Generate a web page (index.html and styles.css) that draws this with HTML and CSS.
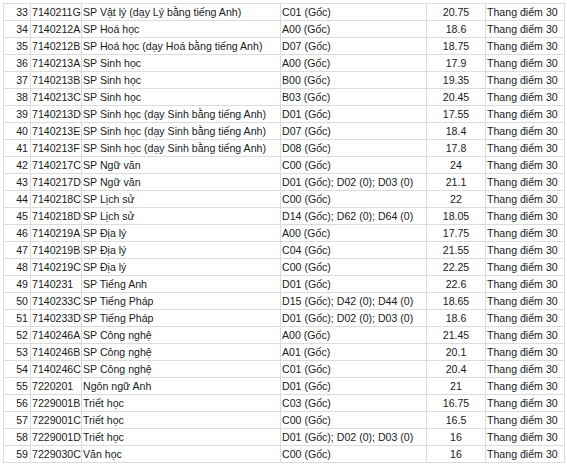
FILE: index.html
```html
<!DOCTYPE html>
<html lang="vi">
<head>
<meta charset="utf-8">
<title>Điểm chuẩn</title>
<link rel="stylesheet" href="styles.css">
</head>
<body>
<div class="frame">
<table class="grid">
<colgroup>
<col class="c-stt"><col class="c-code"><col class="c-name"><col class="c-block"><col class="c-score"><col class="c-scale">
</colgroup>
<tbody>
<tr><td class="stt">33</td><td>7140211G</td><td>SP Vật lý (dạy Lý bằng tiếng Anh)</td><td>C01 (Gốc)</td><td class="score">20.75</td><td>Thang điểm 30</td></tr>
<tr><td class="stt">34</td><td>7140212A</td><td>SP Hoá học</td><td>A00 (Gốc)</td><td class="score">18.6</td><td>Thang điểm 30</td></tr>
<tr><td class="stt">35</td><td>7140212B</td><td>SP Hoá học (dạy Hoá bằng tiếng Anh)</td><td>D07 (Gốc)</td><td class="score">18.75</td><td>Thang điểm 30</td></tr>
<tr><td class="stt">36</td><td>7140213A</td><td>SP Sinh học</td><td>A00 (Gốc)</td><td class="score">17.9</td><td>Thang điểm 30</td></tr>
<tr><td class="stt">37</td><td>7140213B</td><td>SP Sinh học</td><td>B00 (Gốc)</td><td class="score">19.35</td><td>Thang điểm 30</td></tr>
<tr><td class="stt">38</td><td>7140213C</td><td>SP Sinh học</td><td>B03 (Gốc)</td><td class="score">20.45</td><td>Thang điểm 30</td></tr>
<tr><td class="stt">39</td><td>7140213D</td><td>SP Sinh học (dạy Sinh bằng tiếng Anh)</td><td>D01 (Gốc)</td><td class="score">17.55</td><td>Thang điểm 30</td></tr>
<tr><td class="stt">40</td><td>7140213E</td><td>SP Sinh học (dạy Sinh bằng tiếng Anh)</td><td>D07 (Gốc)</td><td class="score">18.4</td><td>Thang điểm 30</td></tr>
<tr><td class="stt">41</td><td>7140213F</td><td>SP Sinh học (dạy Sinh bằng tiếng Anh)</td><td>D08 (Gốc)</td><td class="score">17.8</td><td>Thang điểm 30</td></tr>
<tr><td class="stt">42</td><td>7140217C</td><td>SP Ngữ văn</td><td>C00 (Gốc)</td><td class="score">24</td><td>Thang điểm 30</td></tr>
<tr><td class="stt">43</td><td>7140217D</td><td>SP Ngữ văn</td><td>D01 (Gốc); D02 (0); D03 (0)</td><td class="score">21.1</td><td>Thang điểm 30</td></tr>
<tr><td class="stt">44</td><td>7140218C</td><td>SP Lịch sử</td><td>C00 (Gốc)</td><td class="score">22</td><td>Thang điểm 30</td></tr>
<tr><td class="stt">45</td><td>7140218D</td><td>SP Lịch sử</td><td>D14 (Gốc); D62 (0); D64 (0)</td><td class="score">18.05</td><td>Thang điểm 30</td></tr>
<tr><td class="stt">46</td><td>7140219A</td><td>SP Địa lý</td><td>A00 (Gốc)</td><td class="score">17.75</td><td>Thang điểm 30</td></tr>
<tr><td class="stt">47</td><td>7140219B</td><td>SP Địa lý</td><td>C04 (Gốc)</td><td class="score">21.55</td><td>Thang điểm 30</td></tr>
<tr><td class="stt">48</td><td>7140219C</td><td>SP Địa lý</td><td>C00 (Gốc)</td><td class="score">22.25</td><td>Thang điểm 30</td></tr>
<tr><td class="stt">49</td><td>7140231</td><td>SP Tiếng Anh</td><td>D01 (Gốc)</td><td class="score">22.6</td><td>Thang điểm 30</td></tr>
<tr><td class="stt">50</td><td>7140233C</td><td>SP Tiếng Pháp</td><td>D15 (Gốc); D42 (0); D44 (0)</td><td class="score">18.65</td><td>Thang điểm 30</td></tr>
<tr><td class="stt">51</td><td>7140233D</td><td>SP Tiếng Pháp</td><td>D01 (Gốc); D02 (0); D03 (0)</td><td class="score">18.6</td><td>Thang điểm 30</td></tr>
<tr><td class="stt">52</td><td>7140246A</td><td>SP Công nghệ</td><td>A00 (Gốc)</td><td class="score">21.45</td><td>Thang điểm 30</td></tr>
<tr><td class="stt">53</td><td>7140246B</td><td>SP Công nghệ</td><td>A01 (Gốc)</td><td class="score">20.1</td><td>Thang điểm 30</td></tr>
<tr><td class="stt">54</td><td>7140246C</td><td>SP Công nghệ</td><td>C01 (Gốc)</td><td class="score">20.4</td><td>Thang điểm 30</td></tr>
<tr><td class="stt">55</td><td>7220201</td><td>Ngôn ngữ Anh</td><td>D01 (Gốc)</td><td class="score">21</td><td>Thang điểm 30</td></tr>
<tr><td class="stt">56</td><td>7229001B</td><td>Triết học</td><td>C03 (Gốc)</td><td class="score">16.75</td><td>Thang điểm 30</td></tr>
<tr><td class="stt">57</td><td>7229001C</td><td>Triết học</td><td>C00 (Gốc)</td><td class="score">16.5</td><td>Thang điểm 30</td></tr>
<tr><td class="stt">58</td><td>7229001D</td><td>Triết học</td><td>D01 (Gốc); D02 (0); D03 (0)</td><td class="score">16</td><td>Thang điểm 30</td></tr>
<tr><td class="stt">59</td><td>7229030C</td><td>Văn học</td><td>C00 (Gốc)</td><td class="score">16</td><td>Thang điểm 30</td></tr>
</tbody>
</table>
</div>
</body>
</html>
```

FILE: styles.css
```css
html, body {
  margin: 0;
  padding: 0;
  background: #ffffff;
}
.frame {
  padding: 3px 0 0 3px;
}
.grid {
  border-collapse: collapse;
  table-layout: fixed;
  width: 561px;
  font-family: "Liberation Sans", Arial, sans-serif;
  font-size: 10.6px;
  color: #1a1a1a;
  border-top: 1px solid #b8b8b8;
  border-left: 1px solid #a8b4c8;
}
.c-stt { width: 27px; }
.c-code { width: 51px; }
.c-name { width: 199px; }
.c-block { width: 146px; }
.c-score { width: 59px; }
.c-scale { width: 79px; }
.grid td {
  border: 1px solid #dcdcdc;
  height: 16px;
  padding: 0 0 0 1px;
  white-space: nowrap;
  overflow: hidden;
  line-height: 16px;
}
.grid td.stt {
  text-align: right;
  padding: 0 2px 0 0;
}
.grid td.score {
  text-align: center;
  padding: 0;
}
```
